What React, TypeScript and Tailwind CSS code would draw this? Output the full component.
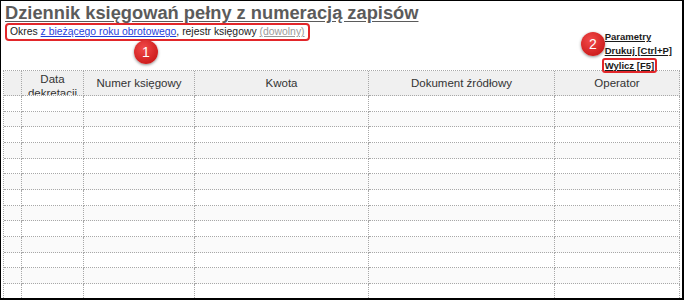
import React from "react";

const cols = ["", "Data dekretacji", "Numer księgowy", "Kwota", "Dokument źródłowy", "Operator"];

function Badge({ n, className }: { n: string; className: string }) {
  return (
    <div
      className={
        "absolute w-[24px] h-[24px] rounded-full flex items-center justify-center text-white text-[14px] " +
        "bg-[radial-gradient(circle_at_40%_35%,#f24a4a,#cf1f1f_70%)] shadow-[0_1px_3px_rgba(0,0,0,0.45)] " +
        className
      }
    >
      {n}
    </div>
  );
}

export default function App() {
  const rows = Array.from({ length: 13 });

  return (
    <div
      className="relative w-[684px] h-[300px] overflow-hidden bg-white border-t border-l border-r-2 border-b-2 border-black"
      style={{ fontFamily: '"Liberation Sans", Arial, sans-serif' }}
    >
      <div className="flex justify-between h-[69px]">
        <div className="pl-[4px] pt-[1px]">
          <h1 className="text-[18.3px] font-bold leading-[21px] text-[#5b5b5b] underline underline-offset-2">
            Dziennik księgowań pełny z numeracją zapisów
          </h1>
          <div className="w-fit h-[18px] border-2 border-[#e2262a] rounded-[4px] pl-[3px] pr-[3px] flex items-center whitespace-nowrap text-[10.4px] text-[#222]">
            <span>
              Okres{" "}
              <span className="text-[#1f3fdc] underline">z bieżącego roku obrotowego</span>, rejestr
              księgowy <span className="text-[#9a9a9a] underline">(dowolny)</span>
            </span>
          </div>
        </div>
        <div className="pt-[29px] pr-[10px] flex flex-col items-start text-[9.5px] font-bold text-[#1a1a1a] leading-[14px]">
          <span className="underline pl-[3px]">Parametry</span>
          <span className="underline pl-[3px]">Drukuj [Ctrl+P]</span>
          <span className="border-2 border-[#e2262a] rounded-[3px] px-[1px] leading-[11px] underline">
            Wylicz [F5]
          </span>
        </div>
      </div>

      <div className="ml-[2px] w-[677px] border-l border-t border-dotted border-[#a8a8a8]">
        <div className="grid grid-cols-[18px_62px_111px_174px_186px_125px] h-[25px] bg-[#f0f0f0] text-[11.5px] text-[#333]">
          {cols.map((c, i) => (
            <div
              key={i}
              className={
                "border-r border-b border-dotted border-[#a8a8a8] overflow-hidden flex justify-center text-center leading-[14px] " +
                (i === 1 ? "items-start pt-[1px]" : "items-center")
              }
            >
              {c}
            </div>
          ))}
        </div>
        {rows.map((_, r) => (
          <div
            key={r}
            className={
              "grid grid-cols-[18px_62px_111px_174px_186px_125px] h-[15.67px] " +
              (r % 2 === 1 ? "bg-[#fafafa]" : "bg-white")
            }
          >
            {cols.map((_, i) => (
              <div key={i} className="border-r border-b border-dotted border-[#a8a8a8]" />
            ))}
          </div>
        ))}
      </div>

      <Badge n="1" className="left-[133px] top-[39px]" />
      <Badge n="2" className="left-[580px] top-[31px]" />
    </div>
  );
}
